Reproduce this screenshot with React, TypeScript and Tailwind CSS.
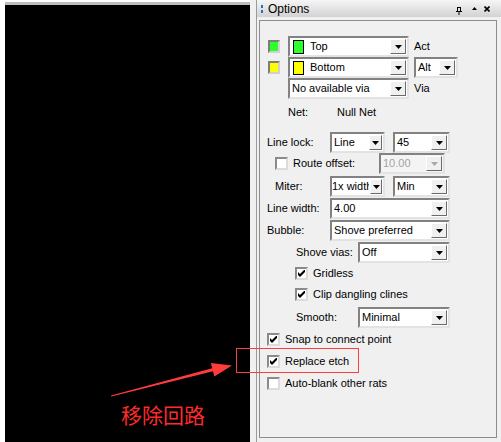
import React from "react";

const Arrow = () => (
  <svg width="7" height="4" viewBox="0 0 7 4">
    <polygon points="0,0 7,0 3.5,4" fill="currentColor" />
  </svg>
);

type ComboProps = {
  className: string;
  text: string;
  swatch?: string;
  btn?: string;
  pad?: string;
  disabled?: boolean;
};

const Combo = ({ className, text, swatch, btn = "w-[16px]", pad = "pl-[2px]", disabled }: ComboProps) => (
  <div
    className={`flex h-[21px] items-stretch border-2 border-t-[#828282] border-l-[#828282] border-r-[#e3e3e3] border-b-[#e3e3e3] ${
      disabled ? "bg-[#f4f4f4] text-[#a3a3a3]" : "bg-white text-black"
    } ${className}`}
  >
    <div className={`flex min-w-0 flex-1 items-center overflow-hidden whitespace-nowrap ${pad}`}>
      {swatch && <span className={`ml-[1px] mr-[6px] h-[14px] w-[11px] shrink-0 border border-black ${swatch}`} />}
      {text}
    </div>
    <div
      className={`m-[1px] flex shrink-0 items-center justify-center border border-t-white border-l-white border-r-[#6a6a6a] border-b-[#6a6a6a] bg-[#f0f0f0] ${btn} ${
        disabled ? "text-[#a8a8a8]" : "text-black"
      }`}
    >
      <Arrow />
    </div>
  </div>
);

const Check = ({ checked }: { checked?: boolean }) => (
  <span className="flex h-[13px] w-[13px] shrink-0 items-center justify-center border-2 border-t-[#8a8a8a] border-l-[#8a8a8a] border-r-[#dcdcdc] border-b-[#dcdcdc] bg-white">
    {checked && (
      <svg width="7" height="7" viewBox="0 0 7 7">
        <polygon points="0,2 2,4 7,-1 7,2 2,7 0,5" fill="#000" />
      </svg>
    )}
  </span>
);

const Swatch = ({ color }: { color: string }) => (
  <span className={`h-[13px] w-[12px] shrink-0 border-2 border-t-[#7d7d7d] border-l-[#7d7d7d] border-r-[#d0d0d0] border-b-[#d0d0d0] ${color}`} />
);

export default function App() {
  return (
    <div className="relative flex h-[442px] w-[501px] overflow-hidden bg-white font-['Liberation_Sans',Arial,sans-serif] text-[11px] text-black">
      {/* canvas */}
      <div className="flex w-[250px] shrink-0 flex-col bg-white pl-[5px] pt-[2px]">
        <div className="flex-1 border-t-[3px] border-[#bdbdbd] bg-black" />
      </div>

      {/* options panel */}
      <div className="flex w-[251px] shrink-0 bg-[#f0f0f0] pl-[6px]">
        <div className="flex flex-1 flex-col border-l border-[#9a9a9a]">
          <div className="flex h-[17px] items-center bg-linear-to-b from-[#f6f6f6] to-[#d2d2d2] pl-[4px] pr-[11px]">
            <div className="flex flex-col gap-[2px]">
              <span className="h-[3px] w-[2px] bg-[#1f6fd0]" />
              <span className="h-[3px] w-[2px] bg-[#1f6fd0]" />
            </div>
            <span className="ml-[5px] text-[12px] leading-none">Options</span>
            <div className="ml-auto flex items-center">
              <svg width="6" height="8" viewBox="0 0 6 8" className="mt-[4px]">
                <rect x="1.5" y="0.5" width="3" height="4" fill="none" stroke="#000" />
                <rect x="0" y="4" width="6" height="1" fill="#000" />
                <rect x="2.5" y="5" width="1" height="3" fill="#000" />
              </svg>
              <svg width="5" height="3" viewBox="0 0 5 3" className="ml-[10px]">
                <polygon points="0,3 5,3 2.5,0" fill="#000" />
              </svg>
              <svg width="6" height="6" viewBox="0 0 6 6" className="ml-[7px]">
                <path d="M0.5 0.5 L5.5 5.5 M5.5 0.5 L0.5 5.5" stroke="#000" strokeWidth="1.6" />
              </svg>
            </div>
          </div>

          <div className="ml-[2px] mr-[4px] mt-[3px] flex h-[418px] flex-col border border-[#8c8c8c] pt-[15px]">
            <div className="flex h-[21px] items-center pl-[8px]">
              <Swatch color="bg-[#2cff2c]" />
              <Combo className="ml-[8px] w-[121px]" text="Top" swatch="bg-[#2cff2c]" />
              <span className="ml-[5px]">Act</span>
            </div>
            <div className="flex h-[21px] items-center pl-[8px]">
              <Swatch color="bg-[#ffff00]" />
              <Combo className="ml-[8px] w-[121px]" text="Bottom" swatch="bg-[#ffff00]" />
              <Combo className="ml-[5px] w-[44px]" text="Alt" />
            </div>
            <div className="flex h-[21px] items-center pl-[28px]">
              <Combo className="w-[121px]" text="No available via" />
              <span className="ml-[5px]">Via</span>
            </div>
            <div className="mt-[3px] flex h-[20px] items-center pl-[28px]">
              <span className="w-[49px]">Net:</span>
              <span>Null Net</span>
            </div>

            <div className="mt-[10px] flex h-[21px] items-center pl-[7px]">
              <span className="w-[63px]">Line lock:</span>
              <Combo className="w-[55px]" text="Line" btn="w-[13px]" />
              <Combo className="ml-[8px] w-[57px]" text="45" />
            </div>
            <div className="flex h-[21px] items-center pl-[15px]">
              <div className="flex w-[104px] items-center">
                <Check />
                <span className="ml-[5px]">Route offset:</span>
              </div>
              <Combo className="w-[66px]" text="10.00" disabled />
            </div>
            <div className="mt-[2px] flex h-[21px] items-center pl-[15px]">
              <span className="w-[55px]">Miter:</span>
              <Combo className="w-[55px]" text="1x width" btn="w-[12px]" pad="pl-0" />
              <Combo className="ml-[8px] w-[57px]" text="Min" />
            </div>
            <div className="mt-[1px] flex h-[21px] items-center pl-[7px]">
              <span className="w-[63px]">Line width:</span>
              <Combo className="w-[120px]" text="4.00" />
            </div>
            <div className="mt-[1px] flex h-[21px] items-center pl-[7px]">
              <span className="w-[63px]">Bubble:</span>
              <Combo className="w-[120px]" text="Shove preferred" />
            </div>
            <div className="mt-[1px] flex h-[21px] items-center pl-[36px]">
              <span className="w-[62px]">Shove vias:</span>
              <Combo className="w-[92px]" text="Off" />
            </div>
            <div className="flex h-[20px] items-center pl-[35px]">
              <Check checked />
              <span className="ml-[5px]">Gridless</span>
            </div>
            <div className="flex h-[22px] items-center pl-[35px]">
              <Check checked />
              <span className="ml-[5px]">Clip dangling clines</span>
            </div>
            <div className="mt-[2px] flex h-[21px] items-center pl-[36px]">
              <span className="w-[62px]">Smooth:</span>
              <Combo className="w-[92px]" text="Minimal" />
            </div>
            <div className="flex h-[22px] items-center pl-[7px]">
              <Check checked />
              <span className="ml-[5px]">Snap to connect point</span>
            </div>
            <div className="flex h-[22px] items-center pl-[7px]">
              <Check checked />
              <span className="ml-[5px]">Replace etch</span>
            </div>
            <div className="flex h-[22px] items-center pl-[7px]">
              <Check />
              <span className="ml-[5px]">Auto-blank other rats</span>
            </div>
          </div>
        </div>
      </div>

      {/* annotations */}
      <div className="pointer-events-none absolute left-[236px] top-[348px] h-[25px] w-[123px] border border-[#ff3b3b]" />
      <svg className="pointer-events-none absolute left-0 top-0" width="501" height="442" viewBox="0 0 501 442">
        <polygon
          points="111,395.5 212.2,368.3 210.9,363 232,365.5 214.3,376.6 213,371.3 111.3,396.5"
          fill="#ff3b3b"
        />
      </svg>
      <span className="pointer-events-none absolute left-[121px] top-[404px] font-['Noto_Sans_CJK_SC',sans-serif] text-[21px] leading-none text-[#ff2a2a]">
        移除回路
      </span>
    </div>
  );
}
